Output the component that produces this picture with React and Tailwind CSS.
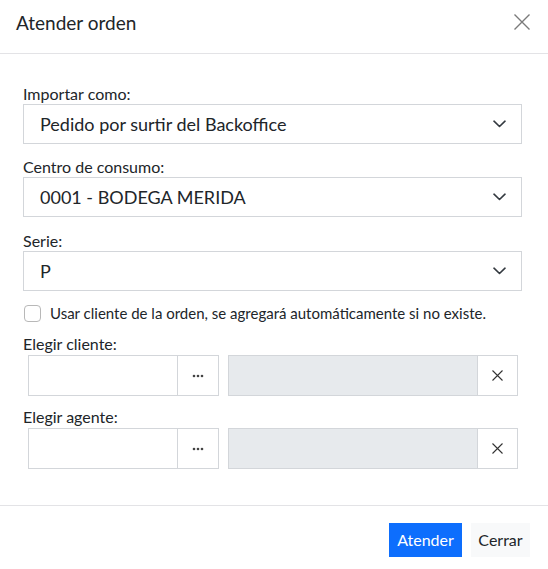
const bodyFont = { fontFamily: '"Lato", "Liberation Sans", sans-serif' };

function Chevron() {
  return (
    <svg width="13" height="8" viewBox="0 0 13 8" fill="none">
      <path d="M1 1.2l5.5 5.3 5.5-5.3" stroke="#343a40" strokeWidth="1.6" strokeLinecap="round" strokeLinejoin="round" />
    </svg>
  );
}

function Cross({ size, color, width }) {
  return (
    <svg width={size} height={size} viewBox={`0 0 ${size} ${size}`} fill="none">
      <path d={`M0.5 0.5L${size - 0.5} ${size - 0.5}M${size - 0.5} 0.5L0.5 ${size - 0.5}`} stroke={color} strokeWidth={width} />
    </svg>
  );
}

function SelectField({ label, value }) {
  return (
    <div>
      <p className="h-[20px] text-[16px] leading-[20px] text-[#212529]">{label}</p>
      <div className="flex h-[40px] items-center justify-between border border-[#d3d6da] pl-[16px] pr-[15px]">
        <span className="text-[18px] text-[#212529]">{value}</span>
        <Chevron />
      </div>
    </div>
  );
}

function LookupField({ label }) {
  return (
    <div>
      <p className="h-[20px] text-[16px] leading-[20px] text-[#212529]">{label}</p>
      <div className="mt-[1px] flex pl-[5px] pr-[4px]">
        <div className="flex h-[41px] w-[191px] border border-[#d3d6da]">
          <div className="flex-1" />
          <div className="flex w-[41px] items-center justify-center border-l border-[#d3d6da]">
            <svg width="12" height="4" viewBox="0 0 12 4">
              <circle cx="2" cy="2" r="1.3" fill="#444" />
              <circle cx="6" cy="2" r="1.3" fill="#444" />
              <circle cx="10" cy="2" r="1.3" fill="#444" />
            </svg>
          </div>
        </div>
        <div className="ml-[9px] flex h-[41px] flex-1 border border-[#d3d6da]">
          <div className="flex-1 bg-[#e7eaed]" />
          <div className="flex w-[40px] items-center justify-center border-l border-[#d3d6da] bg-white">
            <Cross size={11} color="#333" width={1.1} />
          </div>
        </div>
      </div>
    </div>
  );
}

export default function App() {
  return (
    <div className="h-[569px] w-[548px] bg-white" style={bodyFont}>
      <header className="flex h-[54px] items-start justify-between border-b border-[#e3e3e6] pl-[16px] pr-[18px] pt-[11px]">
        <h1 className="text-[19px] leading-[24px] text-[#212529]">Atender orden</h1>
        <div className="mt-[3px]">
          <Cross size={16} color="#7a7a7a" width={1.4} />
        </div>
      </header>

      <main className="h-[451px] pl-[23px] pr-[26px] pt-[30px]">
        <SelectField label="Importar como:" value="Pedido por surtir del Backoffice" />
        <div className="mt-[13px]">
          <SelectField label="Centro de consumo:" value="0001 - BODEGA MERIDA" />
        </div>
        <div className="mt-[14px]">
          <SelectField label="Serie:" value="P" />
        </div>

        <label className="mt-[14px] flex h-[17px] items-center">
          <span className="ml-[1px] h-[17px] w-[17px] shrink-0 rounded-[4px] border border-[#b8b8b8] bg-white" />
          <span className="ml-[9px] whitespace-nowrap text-[15px] text-[#212529]">
            Usar cliente de la orden, se agregará automáticamente si no existe.
          </span>
        </label>

        <div className="mt-[12px]">
          <LookupField label="Elegir cliente:" />
        </div>
        <div className="mt-[11px]">
          <LookupField label="Elegir agente:" />
        </div>
      </main>

      <footer className="flex h-[64px] items-start justify-end gap-[9px] border-t border-[#e3e3e6] pr-[18px] pt-[17px]">
        <button className="h-[34px] w-[73px] bg-[#0d6efd] text-[16px] text-white">Atender</button>
        <button className="h-[34px] w-[59px] bg-[#f8f9fa] text-[16px] text-[#212529]">Cerrar</button>
      </footer>
    </div>
  );
}
